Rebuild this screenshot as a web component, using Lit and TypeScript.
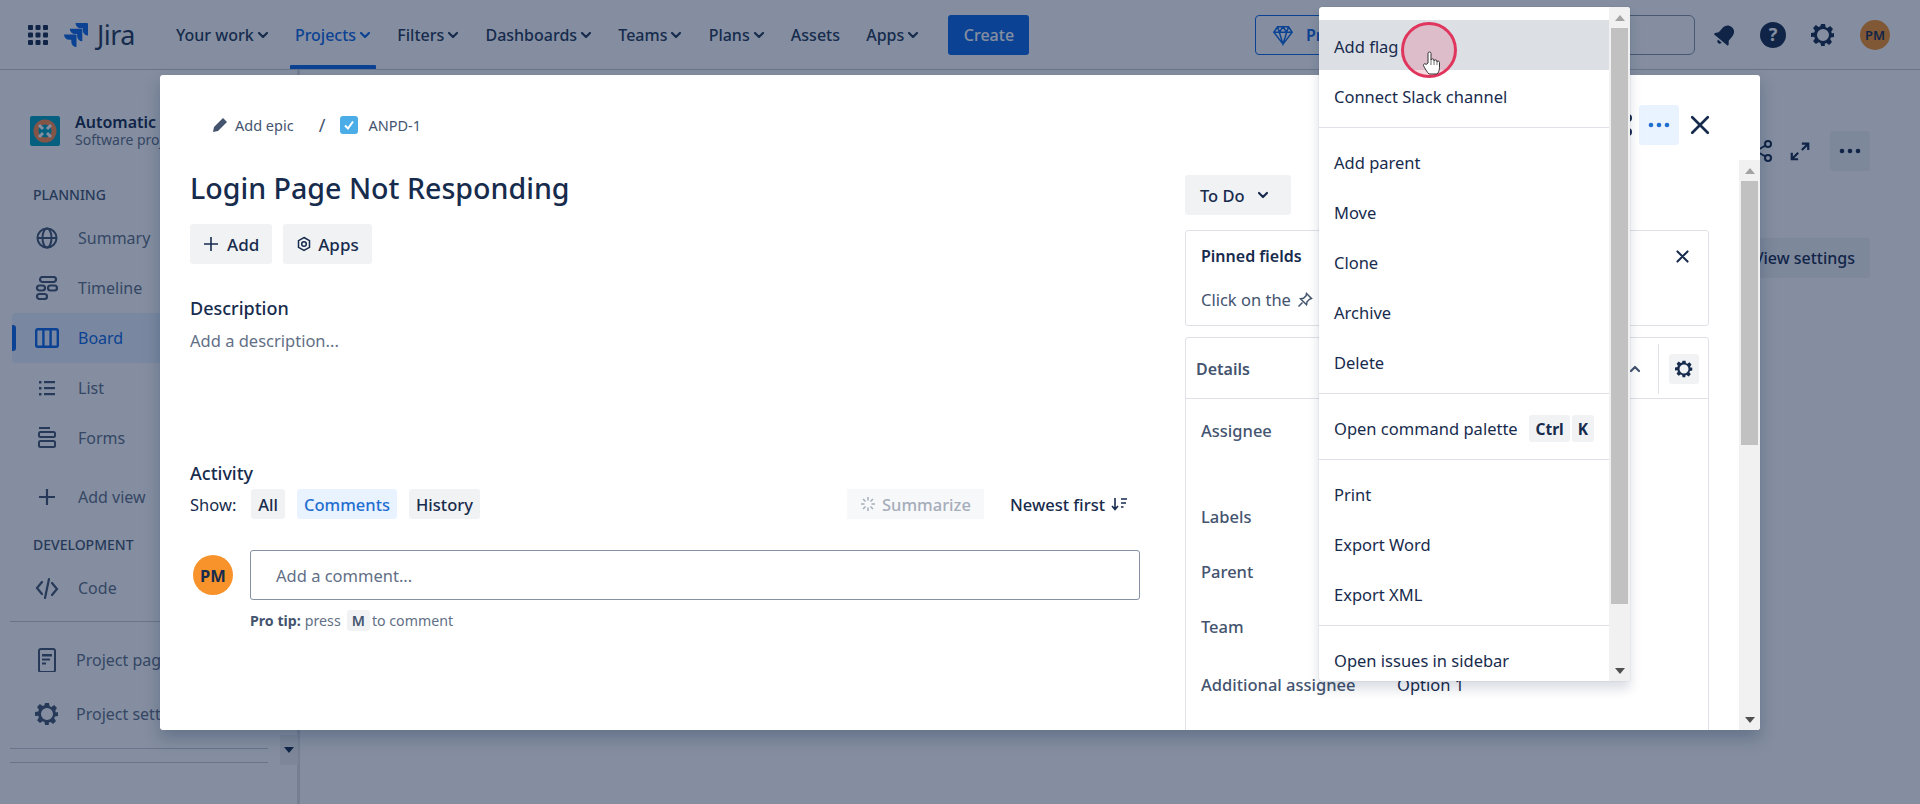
import { LitElement, html, css, svg } from "lit";
import { customElement } from "lit/decorators.js";

const chev = (c = "currentColor") => html`<svg class="chev" viewBox="0 0 12 12" width="12" height="12"><path d="M2 4l4 4 4-4" fill="none" stroke=${c} stroke-width="2.2" stroke-linecap="round" stroke-linejoin="round"/></svg>`;
const gear = (s = 22) => html`<svg viewBox="0 0 24 24" width=${s} height=${s}><path fill-rule="evenodd" fill="currentColor" d="M10 1h4l.7 3.2 1.7.7 2.8-1.8 2.8 2.8-1.8 2.8.7 1.7L23 10.1v3.8l-3.1.7-.7 1.7 1.8 2.8-2.8 2.8-2.8-1.8-1.7.7L13.9 23h-3.8l-.7-3.1-1.7-.7-2.8 1.8-2.8-2.8 1.8-2.8-.7-1.7L0 13.9v-3.8l3.2-.7.7-1.7L2.1 4.9l2.8-2.8 2.8 1.8 1.7-.7zM12 6a6 6 0 100 12 6 6 0 000-12z"/></svg>`;
const x = (s = 18, w = 2.4) => html`<svg viewBox="0 0 18 18" width=${s} height=${s}><path d="M2 2l14 14M16 2L2 16" stroke="currentColor" stroke-width=${w} stroke-linecap="round" fill="none"/></svg>`;
const dots = () => html`<svg viewBox="0 0 24 6" width="24" height="6"><circle cx="4" cy="3" r="2.3" fill="currentColor"/><circle cx="12" cy="3" r="2.3" fill="currentColor"/><circle cx="20" cy="3" r="2.3" fill="currentColor"/></svg>`;
const share = () => html`<svg viewBox="0 0 24 24" width="24" height="24" fill="none" stroke="currentColor" stroke-width="2"><circle cx="6" cy="12" r="3"/><circle cx="18" cy="5" r="3"/><circle cx="18" cy="19" r="3"/><path d="M8.500 10.500l7-4M8.500 13.500l7 4"/></svg>`;

const icons: Record<string, unknown> = {
  globe: svg`<circle cx="12" cy="12" r="9.5" fill="none" stroke="currentColor" stroke-width="2"/><ellipse cx="12" cy="12" rx="4.5" ry="9.5" fill="none" stroke="currentColor" stroke-width="2"/><path d="M2.5 12h19" stroke="currentColor" stroke-width="2"/>`,
  timeline: svg`<g fill="none" stroke="currentColor" stroke-width="2.2"><rect x="5" y="1" width="16" height="5" rx="2.5"/><rect x="2" y="9.5" width="8" height="5" rx="2.5"/><rect x="13" y="9.5" width="9" height="5" rx="2.5"/><rect x="2" y="18" width="10" height="5" rx="2.5"/></g>`,
  board: svg`<g fill="none" stroke="currentColor" stroke-width="2.4"><rect x="1.2" y="3.2" width="21.6" height="17.6" rx="1.5"/><path d="M8.4 3v18M15.6 3v18"/></g>`,
  list: svg`<g fill="currentColor"><rect x="4" y="5" width="2.5" height="2.5"/><rect x="4" y="11" width="2.5" height="2.5"/><rect x="4" y="17" width="2.5" height="2.5"/><rect x="9" y="5" width="11" height="2.2"/><rect x="9" y="11" width="11" height="2.2"/><rect x="9" y="17" width="11" height="2.2"/></g>`,
  forms: svg`<g fill="none" stroke="currentColor" stroke-width="2"><path d="M4 2h11"/><rect x="4" y="6" width="16" height="5" rx="1.5"/><rect x="4" y="15" width="16" height="6" rx="1.5"/></g>`,
  plus: svg`<path d="M12 4v16M4 12h16" stroke="currentColor" stroke-width="2.2" fill="none"/>`,
  code: svg`<path d="M7 6l-5 6 5 6M17 7l5 6-5 6M14 3l-4 19" stroke="currentColor" stroke-width="2.2" fill="none" stroke-linecap="round"/>`,
  page: svg`<g fill="none" stroke="currentColor" stroke-width="2"><rect x="4" y="1" width="16" height="23" rx="2"/></g><path d="M7 6h10v2.4H7zM7 10.5h8v2H7zM7 14.5h4v2H7z" fill="currentColor"/>`,
};
const ic = (n: string, s = 24) => html`<svg class="nav-ic" viewBox="0 0 24 24" width=${s} height=${s}>${icons[n]}</svg>`;

@customElement("app-root")
export class AppRoot extends LitElement {
  static styles = css`
    :host { display: block; position: relative; width: 1920px; height: 804px; overflow: hidden; background: #fff; font-family: "Noto Sans", "Open Sans", sans-serif; font-size: 16px; color: #172b4d; }
    svg { display: block; flex: none; }
    .page { display: flex; flex-direction: column; height: 804px; }
    .top { height: 69px; flex: none; border-bottom: 1px solid #c8cdd6; display: flex; align-items: center; padding-left: 28px; padding-right: 30px; box-sizing: content-box; }
    .logo { margin-left: 16px; color: #0c66e4; }
    .logotext { font-size: 27px; margin-left: 9px; width: 40px; line-height: 30px; letter-spacing: -0.6px; color: #253858; }
    .nav { display: flex; margin-left: 34px; height: 69px; }
    .nav a { display: flex; align-items: center; gap: 3px; padding: 0 5px; margin-right: 16.2px; color: #253858; font-weight: 500; position: relative; }
    .nav a.on { color: #0c66e4; }
    .nav a.on::after { content: ""; position: absolute; left: 0; right: 0; bottom: 0; height: 4px; background: #0c66e4; border-radius: 1px 1px 0 0; }
    .create { background: #0c66e4; color: #fff; font-weight: 500; width: 81px; height: 40px; margin-left: 8px; border-radius: 3px; display: flex; align-items: center; justify-content: center; }
    .topright { margin-left: auto; display: flex; align-items: center; }
    .prem { width: 160px; height: 38px; border: 1px solid #0c66e4; border-radius: 4px 0 0 4px; display: flex; align-items: center; padding-left: 16px; gap: 12px; color: #0c66e4; font-weight: 600; box-sizing: content-box; overflow: hidden; white-space: nowrap; }
    .search { width: 260px; height: 38px; border: 1px solid #8590a2; border-radius: 0 6px 6px 0; }
    .tico { margin-left: 23px; display: flex; }
    .tico.bell { margin-left: 18px; }
    .tico.wide { margin-left: 25px; }
    .ava { width: 30px; height: 30px; border-radius: 50%; background: #f7932a; font-size: 13px; font-weight: 600; display: flex; align-items: center; justify-content: center; }
    .under { flex: 1; display: flex; min-height: 0; }
    .side { width: 300px; flex: none; border-right: 3px solid #dfe1e6; box-sizing: border-box; color: #626f86; }
    .side svg { color: #44546f; }
    .side .on svg { color: #0c66e4; }
    .proj { display: flex; gap: 15px; margin: 46px 0 0 30px; height: 30px; }
    .proj b { display: block; font-weight: 600; color: #172b4d; line-height: 16px; margin-top: -2px; }
    .proj span { display: block; font-size: 14px; line-height: 20px; }
    .lab { margin: 39px 0 0 33px; font-size: 14px; line-height: 20px; font-weight: 500; color: #44546f; }
    .lab.dev { margin-top: 13px; }
    .item { height: 50px; display: flex; align-items: center; gap: 19px; margin-left: 12px; padding-left: 23px; border-radius: 3px; }
    .item.first { margin-top: 8px; }
    .item.on { background: #e9f2ff; color: #0c66e4; position: relative; }
    .item.on::before { content: ""; position: absolute; left: 0; top: 12px; bottom: 12px; width: 4px; background: #0c66e4; border-radius: 0 3px 3px 0; }
    .item.add { margin-top: 9px; }
    .item.code { margin-top: 8px; }
    .item.p { gap: 17px; }
    .item.p2 { margin-top: 13px; }
    .item.p3 { margin-top: 4px; }
    .rule { height: 1px; background: #c8cdd6; margin: 9px 29px 0 10px; }
    .rule.a { margin-right: 0; margin-top: 8px; }
    .rule.b { margin-top: 13px; }
    .main { flex: 1; display: flex; flex-direction: column; align-items: flex-end; padding-right: 50px; }
    .tools { display: flex; align-items: center; margin-top: 61px; color: #172b4d; }
    .tools .exp { margin: 0 19px 0 15px; }
    .more { width: 40px; height: 40px; display: flex; align-items: center; justify-content: center; background: #f1f2f4; border-radius: 3px; }
    .viewset { margin-top: 67px; height: 40px; background: #f1f2f4; border-radius: 3px; padding: 0 15px 0 30px; display: flex; align-items: center; font-weight: 500; }
    .dim { position: absolute; inset: 0; background: rgba(9, 30, 66, 0.5); }
    .sbtn { position: absolute; left: 280px; top: 735px; width: 18px; height: 30px; background: #f1f1f1; display: flex; align-items: center; justify-content: center; }
    .tri-d { width: 0; height: 0; border-left: 5px solid transparent; border-right: 5px solid transparent; border-top: 6px solid #505050; }
    .tri-u { width: 0; height: 0; border-left: 5px solid transparent; border-right: 5px solid transparent; border-bottom: 6px solid #a3a3a3; }
    .sbtn .tri-d { border-top-color: #172b4d; }

    .modal { position: absolute; left: 160px; top: 75px; width: 1600px; height: 655px; background: #fff; border-radius: 3px; overflow: hidden; display: flex; flex-direction: column; box-shadow: 0 8px 16px rgba(9,30,66,.25); font-size: 16.5px; }
    .mhead { height: 85px; flex: none; display: flex; padding: 30px 50px 0 52px; box-sizing: border-box; }
    .crumb { display: flex; align-items: center; height: 40px; font-size: 14.5px; color: #44546f; }
    .crumb .slash { margin: 0 15px 0 25px; font-size: 18px; color: #44546f; }
    .crumb .chk { width: 18px; height: 18px; background: #4bade8; border-radius: 3px; display: flex; align-items: center; justify-content: center; margin-right: 10px; }
    .crumb .ep { margin-left: 7px; }
    .mact { margin-left: auto; display: flex; align-items: center; height: 40px; gap: 11px; }
    .mact .sh { margin-right: -6px; }
    .mact .dotsbtn { width: 40px; height: 40px; background: #e9f2ff; color: #1f6fd1; border-radius: 3px; display: flex; align-items: center; justify-content: center; }
    .mbody { flex: 1; min-height: 0; display: flex; }
    .left { width: 1025px; flex: none; padding: 8px 45px 0 30px; box-sizing: border-box; }
    h1 { margin: 0; font-size: 28.6px; line-height: 40px; font-weight: 500; color: #172b4d; }
    .btns { display: flex; gap: 11px; margin-top: 16px; }
    .btn { height: 40px; background: #f1f2f4; border-radius: 3px; display: flex; align-items: center; gap: 8px; padding: 0 13px; font-weight: 500; font-size: 17px; }
    .btn.ap { gap: 6px; }
    h2 { margin: 32px 0 0; font-size: 18px; line-height: 24px; font-weight: 500; }
    .ph { margin-top: 9px; line-height: 24px; color: #626f86; }
    h2.act { margin-top: 108px; }
    .show { display: flex; align-items: center; height: 30px; margin-top: 4px; }
    .chip { height: 30px; background: #f1f2f4; border-radius: 3px; display: flex; align-items: center; padding: 0 7px; margin-right: 12px; font-weight: 500; }
    .chip.cur { background: #e9f2ff; color: #1f6fd1; }
    .showl { margin-right: 15px; color: #172b4d; }
    .summ { margin-left: auto; width: 137px; height: 30px; background: #f7f8f9; color: #a5adba; display: flex; align-items: center; justify-content: center; gap: 6px; font-weight: 500; box-sizing: border-box; }
    .newest { display: flex; align-items: center; gap: 5px; margin-left: 26px; font-weight: 500; margin-right: 12px; }
    .cmt { display: flex; margin-top: 31px; gap: 17px; }
    .pm { width: 40px; height: 40px; margin: 5px 0 0 3px; border-radius: 50%; background: #f7932a; font-weight: 700; display: flex; align-items: center; justify-content: center; flex: none; }
    .inp { flex: 1; height: 50px; border: 1px solid #8590a2; border-radius: 3px; box-sizing: border-box; display: flex; align-items: center; padding-left: 25px; color: #626f86; }
    .tip { margin: 10px 0 0 60px; font-size: 14.2px; line-height: 21px; color: #626f86; display: flex; align-items: center; gap: 4px; }
    .tip b { font-weight: 700; color: #44546f; }
    .tip kbd { font-family: inherit; font-weight: 600; background: #f1f2f4; color: #44546f; border-radius: 3px; padding: 0 5px; margin: 0 -2px 0 2px; }
    .right { width: 524px; flex: none; padding-top: 15px; }
    .todo { width: 106px; height: 40px; background: #f1f2f4; border-radius: 3px; display: flex; align-items: center; gap: 12px; padding-left: 15px; box-sizing: border-box; font-weight: 500; }
    .box { border: 1px solid #dfe1e6; border-radius: 3px; box-sizing: border-box; }
    .pin { height: 96px; margin-top: 15px; padding: 13px 15px; }
    .pinh { display: flex; justify-content: space-between; align-items: center; line-height: 24px; font-weight: 600; padding-right: 4px; font-size: 16px; }
    .pint { margin-top: 20px; line-height: 24px; color: #44546f; display: flex; align-items: center; gap: 6px; }
    .det { margin-top: 11px; height: 500px; }
    .deth { height: 61px; border-bottom: 1px solid #dfe1e6; display: flex; align-items: center; padding: 1px 9px 0 10px; box-sizing: border-box; }
    .deth b { font-weight: 600; color: #44546f; font-size: 16px; }
    .deth .ups { margin-left: auto; margin-right: 17px; color: #44546f; transform: rotate(180deg); }
    .deth .v { width: 1px; height: 50px; background: #dfe1e6; }
    .deth .g { margin-left: 10px; width: 30px; height: 30px; background: #f1f2f4; border-radius: 3px; display: flex; align-items: center; justify-content: center; }
    .fields { padding: 5px 15px 0; display: grid; grid-template-columns: 196px 1fr; grid-template-rows: 84px 56px 55px 55px 60px; align-items: center; font-weight: 500; color: #44546f; }
    .fields .big { height: 84px; padding-top: 15px; line-height: 24px; box-sizing: border-box; }
    .fields .val { font-weight: 400; color: #172b4d; }

    .sb { width: 21px; flex: none; background: #f1f1f1; display: flex; flex-direction: column; }
    .sb .end { height: 21px; display: flex; align-items: center; justify-content: center; flex: none; }
    .sb .th { margin: 0 2px; background: #c1c1c1; flex: none; }
    .sb .fill { flex: 1; }
    .modalsb { margin-left: 30px; }

    .menu { position: absolute; left: 1319px; top: 7px; width: 311px; height: 674px; background: #fff; display: flex; border-radius: 3px; overflow: hidden; box-shadow: 0 8px 12px rgba(9,30,66,.15), 0 0 1px rgba(9,30,66,.31); font-size: 16.5px; }
    .ml { flex: 1; padding-top: 13px; overflow: hidden; }
    .mi { height: 50px; padding: 3px 15px 0; display: flex; align-items: center; justify-content: space-between; box-sizing: border-box; }
    .mi.hov { background: #dcdfe4; }
    .msep { border-bottom: 1px solid #dfe1e6; height: 7px; margin-bottom: 8px; }
    .keys { display: flex; gap: 2px; }
    .keys span { background: #f1f2f4; height: 27px; border-radius: 3px; display: flex; align-items: center; font-weight: 700; padding: 0 6px; font-size: 15.5px; }
    .cursor { position: absolute; left: 1401px; top: 22px; width: 50px; height: 50px; border: 3px solid #e0365e; border-radius: 50%; background: rgba(224, 54, 94, 0.2); }
    .hand { position: absolute; left: 1423px; top: 51px; }
  `;

  private sb(thumb: number) {
    return html`<div class="end"><div class="tri-u"></div></div><div class="th" style="height:${thumb}px"></div><div class="fill"></div><div class="end"><div class="tri-d"></div></div>`;
  }

  private base() {
    return html`<div class="page">
      <header class="top">
        <svg viewBox="0 0 20 20" width="20" height="20" fill="#172b4d">${[0, 7.5, 15].map((a) => [0, 7.5, 15].map((b) => svg`<rect x=${b} y=${a} width="5" height="5" rx="1"/>`))}</svg>
        <svg class="logo" viewBox="-0.5 0 24 24" width="24" height="24" fill="currentColor">
          <path d="M22.500 0H11a5.200 5.200 0 005.200 5.200h2.100v2a5.200 5.200 0 005.200 5.200V1a1 1 0 00-1-1z"/>
          <path d="M16.800 5.800H5.300a5.200 5.200 0 005.200 5.200h2.100v2a5.200 5.200 0 005.200 5.200V6.800a1 1 0 00-1-1z"/>
          <path d="M11 11.500H-.5a5.200 5.200 0 005.200 5.200h2.100v2A5.200 5.200 0 0012 24V12.500a1 1 0 00-1-1z"/>
        </svg>
        <div class="logotext">Jira</div>
        <nav class="nav">
          <a>Your work ${chev()}</a><a class="on">Projects ${chev()}</a><a>Filters ${chev()}</a><a>Dashboards ${chev()}</a><a>Teams ${chev()}</a><a>Plans ${chev()}</a><a>Assets</a><a>Apps ${chev()}</a>
        </nav>
        <div class="create">Create</div>
        <div class="topright">
          <div class="prem"><svg viewBox="0 0 24 24" width="22" height="22" fill="none" stroke="currentColor" stroke-width="1.6"><path d="M6 3h12l4 6-10 13L2 9zM2 9h20M8 9l4 13 4-13M6 3l2 6 4-6 4 6 2-6"/></svg>Premium trial</div>
          <div class="search"></div>
          <div class="tico bell"><svg viewBox="0 0 24 24" width="24" height="24" fill="currentColor"><g transform="rotate(40 12 12)"><path d="M12 1.500c-4 0-6.500 3-6.500 7v5.500L3 17v1.500h18V17l-2.500-3V8.500c0-4-2.500-7-6.500-7zM9.500 20h5l-1 2.500h-3z"/></g></svg></div>
          <div class="tico"><svg viewBox="0 0 26 26" width="26" height="26"><circle cx="13" cy="13" r="13" fill="#172b4d"/><text x="13" y="19" font-size="18" font-weight="700" font-family="Noto Sans" text-anchor="middle" fill="#fff">?</text></svg></div>
          <div class="tico wide">${gear(24)}</div>
          <div class="tico wide ava">PM</div>
        </div>
      </header>
      <div class="under">
        <aside class="side">
          <div class="proj">
            <svg viewBox="0 0 30 30" width="30" height="30"><rect width="30" height="30" rx="2" fill="#00a3bf"/><circle cx="15" cy="15" r="9" fill="none" stroke="#ff8b4d" stroke-width="5"/><path d="M9 9l4 4M21 9l-4 4M9 21l4-4M21 21l-4-4" stroke="#fff" stroke-width="3"/></svg>
            <div><b>Automatic</b><span>Software project</span></div>
          </div>
          <div class="lab">PLANNING</div>
          <div class="item first">${ic("globe")}Summary</div>
          <div class="item">${ic("timeline")}Timeline</div>
          <div class="item on">${ic("board")}Board</div>
          <div class="item">${ic("list")}List</div>
          <div class="item">${ic("forms")}Forms</div>
          <div class="item add">${ic("plus")}Add view</div>
          <div class="lab dev">DEVELOPMENT</div>
          <div class="item code">${ic("code")}Code</div>
          <div class="rule a"></div>
          <div class="item p p2">${ic("page")}Project pages</div>
          <div class="item p p3">${gear(24)}Project settings</div>
          <div class="rule"></div>
          <div class="rule b"></div>
        </aside>
        <main class="main">
          <div class="tools">
            ${share()}
            <svg class="exp" viewBox="0 0 24 24" width="22" height="22" fill="none" stroke="currentColor" stroke-width="2.400"><path d="M14 4h7v7M21 4L14 11M10 21H3v-7M3 21l7-7"/></svg>
            <div class="more">${dots()}</div>
          </div>
          <div class="viewset">View settings</div>
        </main>
      </div>
    </div>`;
  }

  private modal() {
    return html`<section class="modal">
      <div class="mhead">
        <div class="crumb">
          <svg viewBox="0 0 16 16" width="16" height="16" fill="#44546f"><path d="M11 1l4 4-9 9-5 1 1-5z"/></svg>
          <span class="ep">Add epic</span>
          <span class="slash">/</span>
          <span class="chk"><svg viewBox="0 0 12 12" width="12" height="12"><path d="M2 6.500l3 3 5-7" stroke="#fff" stroke-width="2" fill="none"/></svg></span>
          <span>ANPD-1</span>
        </div>
        <div class="mact">
          <span class="sh">${share()}</span>
          <div class="dotsbtn">${dots()}</div>
          ${x(20, 2.4)}
        </div>
      </div>
      <div class="mbody">
        <div class="left">
          <h1>Login Page Not Responding</h1>
          <div class="btns">
            <div class="btn"><svg viewBox="0 0 16 16" width="16" height="16"><path d="M8 1v14M1 8h14" stroke="currentColor" stroke-width="1.600"/></svg>Add</div>
            <div class="btn ap"><svg viewBox="0 0 16 16" width="16" height="16" fill="none" stroke="currentColor" stroke-width="1.500"><path d="M8 1.500l5.500 3.200v6.600L8 14.500l-5.500-3.200V4.700z"/><circle cx="8" cy="8" r="2.300"/></svg>Apps</div>
          </div>
          <h2>Description</h2>
          <div class="ph">Add a description...</div>
          <h2 class="act">Activity</h2>
          <div class="show">
            <span class="showl">Show:</span>
            <div class="chip">All</div><div class="chip cur">Comments</div><div class="chip">History</div>
            <div class="summ"><svg viewBox="0 0 16 16" width="16" height="16" stroke="#a5adba" stroke-width="1.500"><path d="M8 1v3.500M8 11.500V15M1 8h3.500M11.500 8H15M3 3l2.500 2.500M10.500 10.500L13 13M13 3l-2.500 2.500M5.500 10.500L3 13"/></svg>Summarize</div>
            <div class="newest">Newest first <svg viewBox="0 0 18 16" width="18" height="16" fill="none" stroke="currentColor" stroke-width="1.600"><path d="M5 2v11M2 10l3 3.500L8 10M11 3h6M11 7h5M11 11h2.500"/></svg></div>
          </div>
          <div class="cmt"><div class="pm">PM</div><div class="inp">Add a comment...</div></div>
          <div class="tip"><b>Pro tip:</b> press <kbd>M</kbd> to comment</div>
        </div>
        <div class="right">
          <div class="todo">To Do ${chev()}</div>
          <div class="box pin">
            <div class="pinh"><span>Pinned fields</span>${x(13, 2.8)}</div>
            <div class="pint">Click on the <svg viewBox="0 0 16 16" width="16" height="16" fill="none" stroke="currentColor" stroke-width="1.500"><path d="M9.500 1.500l5 5-2 .8-2.500 2.500-.5 3-6-6 3-.5 2.500-2.500zM5.500 10.500L1.500 14.500"/></svg></div>
          </div>
          <div class="box det">
            <div class="deth"><b>Details</b><span class="ups">${chev()}</span><span class="v"></span><span class="g">${gear(18)}</span></div>
            <div class="fields">
              <div class="big">Assignee</div><div></div>
              <div>Labels</div><div></div>
              <div>Parent</div><div></div>
              <div>Team</div><div></div>
              <div>Additional assignee</div><div class="val">Option 1</div>
            </div>
          </div>
        </div>
        <div class="sb modalsb">${this.sb(264)}</div>
      </div>
    </section>`;
  }

  private menu() {
    return html`<section class="menu">
      <div class="ml">
        <div class="mi hov">Add flag</div>
        <div class="mi">Connect Slack channel</div>
        <div class="msep"></div>
        <div class="mi">Add parent</div>
        <div class="mi">Move</div>
        <div class="mi">Clone</div>
        <div class="mi">Archive</div>
        <div class="mi">Delete</div>
        <div class="msep"></div>
        <div class="mi">Open command palette <span class="keys"><span>Ctrl</span><span>K</span></span></div>
        <div class="msep"></div>
        <div class="mi">Print</div>
        <div class="mi">Export Word</div>
        <div class="mi">Export XML</div>
        <div class="msep"></div>
        <div class="mi">Open issues in sidebar</div>
      </div>
      <div class="sb">${this.sb(576)}</div>
    </section>`;
  }

  render() {
    return html`
      ${this.base()}
      <div class="sbtn"><div class="tri-d"></div></div>
      <div class="dim"></div>
      ${this.modal()}
      ${this.menu()}
      <div class="cursor"></div>
      <svg class="hand" viewBox="0 0 17 24" width="17" height="24"><path d="M5 12V2.500a1.500 1.500 0 013 0V9c0-1.500 3-1.500 3 0v1c0-1.500 3-1.500 3 0v1c0-1.200 2.500-1.200 2.500.5v5c0 3-1.500 6-2.500 6.500H6c-1.500-1-5-7-5.500-8.500-.4-1.500 1.500-2.500 2.500-1z" fill="#fff" stroke="#333" stroke-width="1"/><path d="M8 9v5M11 10v4M14 11v3" stroke="#333" stroke-width=".7"/></svg>
    `;
  }
}
